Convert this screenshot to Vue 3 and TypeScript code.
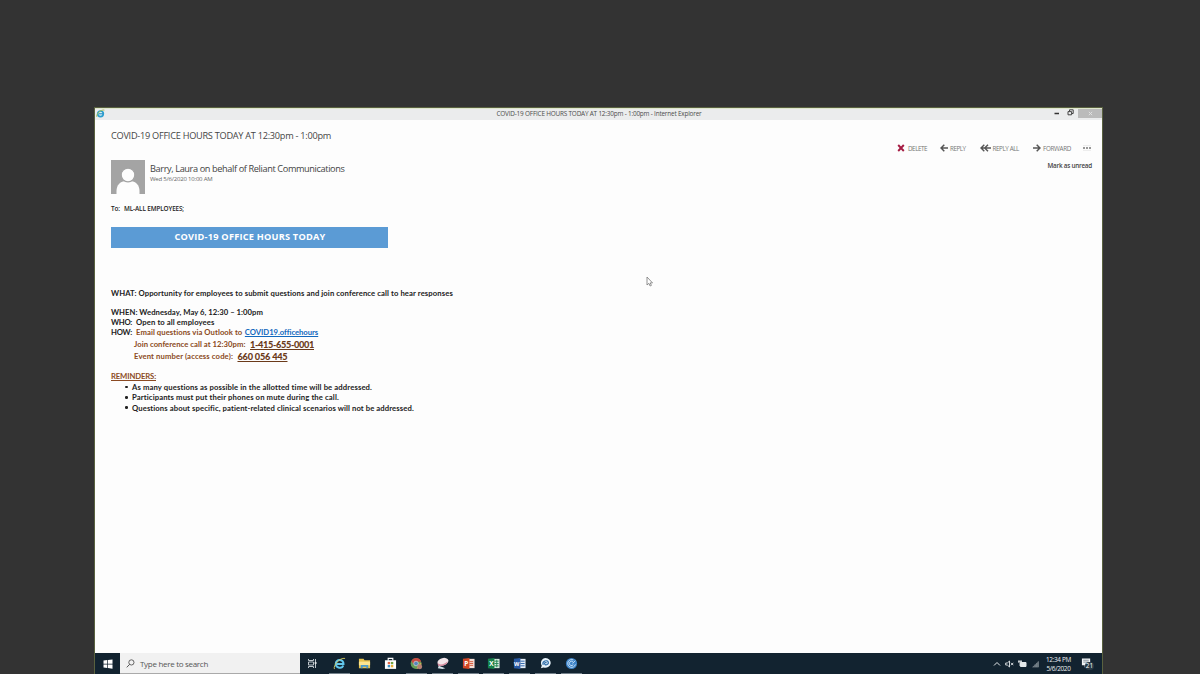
<script setup lang="ts">
import { ref } from 'vue'

// Tracks text so that each run occupies the given width in pixels.
const vFit = {
  mounted(el: HTMLElement, binding: { value: number }) {
    const natural = el.getBoundingClientRect().width
    const count = (el.textContent ?? '').length
    if (count > 1) el.style.letterSpacing = `${(binding.value - natural) / count}px`
  },
}

const reminders = ref([
  { text: 'As many questions as possible in the allotted time will be addressed.', width: 240 },
  { text: 'Participants must put their phones on mute during the call.', width: 207 },
  { text: 'Questions about specific, patient-related clinical scenarios will not be addressed.', width: 282 },
])
</script>

<template>
  <main class="desktop">
    <section class="window">
      <header class="titlebar">
        <svg class="ie" viewBox="0 0 16 16"><circle cx="8" cy="8.5" r="5" fill="#d9f1f7" stroke="#2d9fcf" stroke-width="3" /><path d="M5 8.5h8" stroke="#2d8fc4" stroke-width="2" /><path d="M1.5 14C-1 10 9 0 15 2" fill="none" stroke="#a9c04c" stroke-width="1.6" /></svg>
        <span class="title"><span v-fit="205">COVID-19 OFFICE HOURS TODAY AT 12:30pm - 1:00pm - Internet Explorer</span></span>
        <div class="controls">
          <svg class="min" viewBox="0 0 6 6"><path d="M.5 4.5h4.5" stroke="#333" stroke-width="1.5" /></svg>
          <svg class="restore" viewBox="0 0 7 7"><path d="M2.5 2V.8h3.7v3.7H5" fill="none" stroke="#444" /><path d="M1 2.6h3.6v3.2H1z" fill="none" stroke="#444" /></svg>
          <span class="close"><svg viewBox="0 0 6 6"><path d="M1 1l4 4M5 1L1 5" stroke="#e4e4e4" stroke-width="1.1" /></svg></span>
        </div>
      </header>

      <article class="mail">
        <div class="top">
          <div class="heading">
            <h1><span v-fit="220">COVID-19 OFFICE HOURS TODAY AT 12:30pm - 1:00pm</span></h1>
            <div class="sender">
              <svg class="avatar" viewBox="0 0 34 34"><path fill="#a4a4a4" d="M0 0h34v34H0z" /><path d="M5.500 34v-3c0-6 4-9.800 8-9.800h7c4 0 8 3.800 8 9.800v3z" fill="#fdfdfd" /><circle cx="17" cy="15" r="6.800" fill="#fdfdfd" stroke="#a4a4a4" stroke-width="1.200" /></svg>
              <div>
                <p class="name"><span v-fit="194.500">Barry, Laura on behalf of Reliant Communications</span></p>
                <p class="date"><span v-fit="62.500">Wed 5/6/2020 10:00 AM</span></p>
              </div>
            </div>
          </div>
          <div class="side">
            <nav class="actions">
              <a class="a1"><svg viewBox="0 0 8 8"><path d="M1.200 1l5.600 6M6.800 1L1.200 7" stroke="#a51c43" stroke-width="1.900" /></svg><span v-fit="19">DELETE</span></a>
              <a class="a2"><svg viewBox="0 0 8 8"><path d="M8 4H1.300M4.300.8L1 4l3.300 3.200" fill="none" stroke="#555" stroke-width="1.500" /></svg><span v-fit="15.500">REPLY</span></a>
              <a class="a3"><svg class="wide" viewBox="0 0 11 8"><path d="M11 4H2M4.300.8L1 4l3.300 3.200M8 .8L4.700 4 8 7.200" fill="none" stroke="#555" stroke-width="1.400" /></svg><span v-fit="26.500">REPLY ALL</span></a>
              <a class="a4"><svg viewBox="0 0 8 8"><path d="M0 4h6.700M3.700.8L7 4 3.700 7.200" fill="none" stroke="#555" stroke-width="1.500" /></svg><span v-fit="28">FORWARD</span></a>
              <a class="more"><svg viewBox="0 0 10 6"><path d="M1 .6h8M1 5.400h8" stroke="#ddd" stroke-width=".6" /><path d="M1 3h2M4 3h2M7 3h2" stroke="#777" stroke-width="1.700" /></svg></a>
            </nav>
            <span class="unread"><span v-fit="44.500">Mark as unread</span></span>
          </div>
        </div>

        <p class="to"><span v-fit="9">To:</span><span class="list" v-fit="60">ML-ALL EMPLOYEES;</span></p>
        <div class="banner"><span v-fit="151">COVID-19 OFFICE HOURS TODAY</span></div>

        <div class="message">
          <p class="what"><span v-fit="342">WHAT: Opportunity for employees to submit questions and join conference call to hear responses</span></p>
          <p><span v-fit="152">WHEN: Wednesday, May 6, 12:30 – 1:00pm</span></p>
          <p><span v-fit="21">WHO:</span><span class="after" v-fit="78.500">Open to all employees</span></p>
          <p><span v-fit="21">HOW:</span><span class="after brown" v-fit="106.500">Email questions via Outlook to</span><a class="link" v-fit="73">COVID19.officehours</a></p>
          <p class="call brown"><span v-fit="111.500">Join conference call at 12:30pm:</span><b v-fit="64">1-415-655-0001</b></p>
          <p class="call brown"><span v-fit="99">Event number (access code):</span><b v-fit="50">660 056 445</b></p>
          <h2><span v-fit="45">REMINDERS:</span></h2>
          <ul>
            <li v-for="item in reminders" :key="item.text"><i></i><span v-fit="item.width">{{ item.text }}</span></li>
          </ul>
        </div>
      </article>

      <footer class="taskbar">
        <div class="start"><svg viewBox="0 0 10 10"><path d="M.5 1.600l3.800-.5v3.600H.5zM5 1l4.500-.6v4.300H5zM.5 5.400h3.800V9L.5 8.500zM5 5.400h4.500v4.300L5 9.100z" fill="#fff" /></svg></div>
        <div class="search"><svg viewBox="0 0 10 10"><circle cx="6" cy="3.800" r="2.900" fill="none" stroke="#444" stroke-width=".9" /><path d="M4 6L.8 9.300" stroke="#444" /></svg><span v-fit="68">Type here to search</span></div>
        <div class="apps">
          <div class="app view"><svg viewBox="0 0 10 9"><path d="M1.500 0v1.500h5V0M1.500 9V7.500h5V9M1.500 3h5v3h-5zM8.500 0v9" fill="none" stroke="#bdc5cb" stroke-width="1" /><path d="M7.700 3h1.800v2H7.700z" fill="#e2e6e8" /></svg></div>
          <div class="app open"><svg viewBox="0 0 14 14"><path d="M3.700 7.600h7.600C11.500 1.800 3 1.800 3 7.300c0 5 6.800 5.500 8 1.800" fill="none" stroke="#62c7ec" stroke-width="2.200" /><path d="M1.500 13C0 9 7 .5 13 1.500" fill="none" stroke="#d5c95d" stroke-width="1" /></svg></div>
          <div class="app"><svg viewBox="0 0 14 14"><path d="M1 2h5l1 1.500h6V12H1z" fill="#e8c34c" /><path d="M1 5h12v4H1z" fill="#fae591" /><path d="M3 12V8.500h8V12H9v-1.500H5V12z" fill="#4b9ccb" /></svg></div>
          <div class="app"><svg viewBox="0 0 14 14"><path d="M4.500 4V1.500h5V4" fill="none" stroke="#fff" stroke-width="1.200" /><path d="M1 3.500h12v9.300H1z" fill="#fff" /><path d="M4 5.300h2.600v2.500H4z" fill="#e46745" /><path d="M7.400 5.300H10v2.500H7.400z" fill="#72a441" /><path d="M4 8.600h2.600v2.500H4z" fill="#3a91c7" /><path d="M7.400 8.600H10v2.500H7.400z" fill="#e9ae38" /></svg></div>
          <div class="app open"><svg viewBox="0 0 14 14"><circle cx="6.500" cy="7" r="5.800" fill="#659d58" /><path d="M1.400 4.200A5.800 5.800 0 0 1 12 5H6.500L4 8z" fill="#c84942" /><path d="M12.200 6A5.800 5.800 0 0 1 7 12.800L9 8z" fill="#cbb157" /><circle cx="6.500" cy="7" r="2.500" fill="#5686bd" stroke="#ddd" stroke-width=".7" /><circle cx="10.500" cy="10.500" r="2.600" fill="#b78074" /></svg></div>
          <div class="app open"><svg viewBox="0 0 14 14"><ellipse cx="7.500" cy="5" rx="6" ry="3.900" fill="#f2e5e9" transform="rotate(-15 7.500 5)" /><path d="M1.500 6.500c3 3 8 1 11-2l-1 3-4 2-5 .5z" fill="#d58c9f" /><path d="M3 9.500l7 2.500-3 1-5-1z" fill="#d5e3ea" /></svg></div>
          <div class="app open"><svg viewBox="0 0 14 14"><path d="M6 2h7.500v10H6z" fill="#f5ddd5" /><path d="M8 5h4M8 7h4M8 9h4" stroke="#d35739" /><path d="M1 2l7-1v12l-7-1z" fill="#d24625" /><text x="2.300" y="9.700" class="letter">P</text></svg></div>
          <div class="app open"><svg viewBox="0 0 14 14"><path d="M6 2h7.500v10H6z" fill="#d8ecdf" /><path d="M8 4.500h4.500M8 7h4.500M8 9.500h4.500M10.500 3v8" stroke="#218553" /><path d="M1 2l7-1v12l-7-1z" fill="#16804a" /><text x="2.300" y="9.700" class="letter">X</text></svg></div>
          <div class="app open"><svg viewBox="0 0 14 14"><path d="M6 2h7.500v10H6z" fill="#e5eef8" /><path d="M8 4.500h4.500M8 7h4.500M8 9.500h4.500" stroke="#2b62aa" /><path d="M1 2l7-1v12l-7-1z" fill="#2859a4" /><text x="1.200" y="9.500" class="letter small">W</text></svg></div>
          <div class="app open"><svg viewBox="0 0 14 14"><path d="M7 1a5.700 5.300 0 1 1-2 10.300L2 12l1-2.500A5.500 5.500 0 0 1 7 1z" fill="#e8f3fb" /><path d="M4.500 8.500C3 4.500 9 2.500 10 5.500c.7 3-4 4-4 1.500 0-1.200 2-1.600 2-.2" fill="none" stroke="#316fab" stroke-width="1.300" /></svg></div>
          <div class="app open"><svg viewBox="0 0 14 14"><circle cx="7" cy="7" r="6" fill="#3d83c8" /><path d="M9 3.200A4.200 4.200 0 1 0 11.200 8M8.500 5.200A2.300 2.300 0 1 0 9 8M8 7l3-3" fill="none" stroke="#cce4f7" stroke-width="1" /></svg></div>
        </div>
        <div class="tray">
          <svg class="chev" viewBox="0 0 8 8"><path d="M1 5.500L4 2.500l3 3" fill="none" stroke="#e5e9eb" /></svg>
          <svg class="sound" viewBox="0 0 9 8"><path d="M.7 3h1.600L4.500 1v6L2.300 5H.7z" fill="none" stroke="#e5e9eb" stroke-width=".9" /><path d="M6 2.800l2.300 2.400M8.300 2.800L6 5.200" stroke="#e5e9eb" stroke-width=".9" /></svg>
          <svg class="battery" viewBox="0 0 9 8"><path d="M2.500 2.500H8v4H2.500z" fill="#e5e9eb" stroke="#e5e9eb" /><path d="M0 1.700h4M1 0v3M3 0v3M2 3v3" stroke="#e5e9eb" stroke-width=".9" /></svg>
          <svg class="signal" viewBox="0 0 8 8"><path d="M0 8L7.500.5V8z" fill="#59666f" /><path d="M1.500 7.500v-1M3.500 7.500v-3M5.500 7.500V2.800M7.200 7.500V1" stroke="#9aa3a9" stroke-width=".7" /></svg>
          <div class="clock"><p><span v-fit="25">12:34 PM</span></p><p><span v-fit="24">5/6/2020</span></p></div>
          <div class="notes"><svg viewBox="0 0 12 12"><path d="M1 1h9v7.500H6L4 11V8.500H1z" fill="#f1f4f5" /><path d="M2.500 3h6M2.500 5h6" stroke="#526270" stroke-width=".7" /></svg><span class="badge">21</span></div>
        </div>
      </footer>
    </section>
    <svg class="cursor" viewBox="0 0 7 11"><path d="M1 1v8l1.900-1.700L4.100 10l1.300-.6-1.200-2.500H6.500z" fill="#fff" stroke="#777" stroke-width=".8" /></svg>
  </main>
</template>

<style>
html, body { margin: 0; background: #333; overflow: hidden; }
</style>

<style scoped>
* { box-sizing: border-box; }
p, h1, h2, ul { margin: 0; padding: 0; font-weight: normal; }
span, a, b { white-space: nowrap; }
svg { display: block; flex: none; }
.desktop { position: relative; width: 1200px; height: 674px; padding: 108px 98px 0 95px; background: #333; font-family: "Open Sans", "Noto Sans", sans-serif; color: #444; }
.window { display: flex; flex-direction: column; width: 1007px; height: 566px; background: #fdfdfd; box-shadow: 0 0 0 1px #59613f; }
.titlebar { flex: none; height: 12px; display: flex; align-items: flex-start; background: #ebeced; border-top: 1px solid #dfe6cd; }
.ie { width: 9px; height: 9px; margin-left: 1px; }
.title { flex: 1; padding-left: 391.5px; font-size: 6.4px; line-height: 9px; color: #4c4c4c; }
.controls { display: flex; height: 11px; align-items: flex-start; }
.min { width: 6px; height: 6px; margin: 0 7px 0 0; }
.restore { width: 7px; height: 7px; margin-right: 4px; }
.close { width: 24px; height: 9px; background: #bbb; display: flex; align-items: center; justify-content: center; }
.close svg { width: 5px; height: 5px; }
.mail { flex: 1; padding: 9px 10px 0 16px; }
.top { display: flex; justify-content: space-between; }
h1 { height: 13px; line-height: 13px; font-size: 9.2px; color: #454545; }
.sender { display: flex; gap: 5px; margin-top: 18px; }
.avatar { width: 34px; height: 34px; }
.name { height: 12px; line-height: 13px; margin-top: 2px; font-size: 9.2px; }
.date { height: 8px; line-height: 8px; margin-top: 1px; font-size: 6px; color: #666; }
.side { padding-top: 14px; }
.actions { display: flex; align-items: center; height: 10px; font-size: 6.3px; color: #777; }
.actions a { display: flex; align-items: center; }
.actions a svg { width: 8px; height: 8px; margin-right: 2px; }
.actions a svg.wide { width: 11px; height: 8px; }
.a1 span { margin-left: 1px; }
.a2 { margin-left: 13px; }
.a3, .a4 { margin-left: 14px; }
.actions .more { margin-left: 11px; }
.actions .more svg { width: 10px; height: 6px; margin: 0; }
.unread { display: block; margin-top: 8px; height: 9px; line-height: 9px; text-align: right; font-size: 6.3px; font-weight: 600; color: #444; }
.to { display: flex; gap: 4px; height: 9px; line-height: 9px; margin-top: 10px; font-size: 6.4px; font-weight: 600; color: #222; }
.banner { width: 277px; height: 21px; margin-top: 14px; padding-left: 1px; background: #5b9bd5; color: #fff; text-align: center; line-height: 20px; font-size: 9.2px; font-weight: 700; }
.message { margin-top: 41px; font-family: Lato, "Open Sans", sans-serif; font-size: 7.7px; font-weight: 700; color: #222; }
.message p { display: flex; height: 10px; line-height: 9.4px; font-weight: 700; }
.message .what { margin-bottom: 9px; }
.after { margin-left: 4px; }
.message .brown, .message h2 { color: #8b4a22; }
.link { margin-left: 2.5px; color: #1268bd; text-decoration: underline; }
.message .call { height: 12px; line-height: 13px; padding-left: 23px; }
.call b { margin-left: 4.5px; font-size: 9.2px; color: #6b3a1a; text-decoration: underline; }
h2 { height: 10px; line-height: 9px; margin-top: 10px; font-size: 7.7px; text-decoration: underline; }
.message h2 { font-weight: 700; }
.message ul { list-style: none; font-weight: 700; }
li { display: flex; align-items: center; height: 10.3px; line-height: 10.3px; padding-left: 14px; }
li i { width: 2.5px; height: 2.5px; border-radius: 50%; margin-right: 4.5px; background: #222; }
.taskbar { flex: none; display: flex; height: 21px; background: #122330; }
.start { width: 25px; display: flex; align-items: center; justify-content: center; }
.start svg { width: 10px; height: 10px; }
.search { width: 180px; display: flex; align-items: center; background: #f1f1f1; border-bottom: 1px solid #aaa; color: #555; font-size: 8px; }
.search svg { width: 9px; height: 9px; margin: 0 5px 0 6px; }
.apps { display: flex; padding-left: .5px; }
.app { width: 25.8px; display: flex; align-items: center; justify-content: center; }
.app svg { width: 13px; height: 13px; }
.app.view svg { width: 10px; height: 9px; margin-right: 2px; }
.app.open { background: linear-gradient(#74818b, #74818b) center bottom / 21px 1px no-repeat; }
.letter { fill: #fff; font: bold 7px "Open Sans", sans-serif; }
.letter.small { font-size: 6px; }
.tray { display: flex; align-items: center; margin-left: auto; padding-right: 7px; color: #edf0f2; }
.chev { width: 8px; height: 8px; margin-right: 4px; }
.sound { width: 9px; height: 8px; margin-right: 4px; }
.battery { width: 9px; height: 8px; margin-right: 5px; }
.signal { width: 7px; height: 8px; margin-right: 7px; }
.clock { width: 25px; font-size: 6.4px; text-align: center; }
.clock p { height: 9px; line-height: 9px; }
.notes { position: relative; width: 14px; height: 13px; margin-left: 10px; }
.notes svg { width: 11px; height: 12px; }
.badge { position: absolute; left: 4px; top: 5px; width: 9px; height: 8px; border-radius: 4px; background: #293a46; color: #fff; font-size: 6.5px; line-height: 8px; text-align: center; }
.cursor { position: absolute; left: 646px; top: 276px; width: 7px; height: 11px; }
</style>
